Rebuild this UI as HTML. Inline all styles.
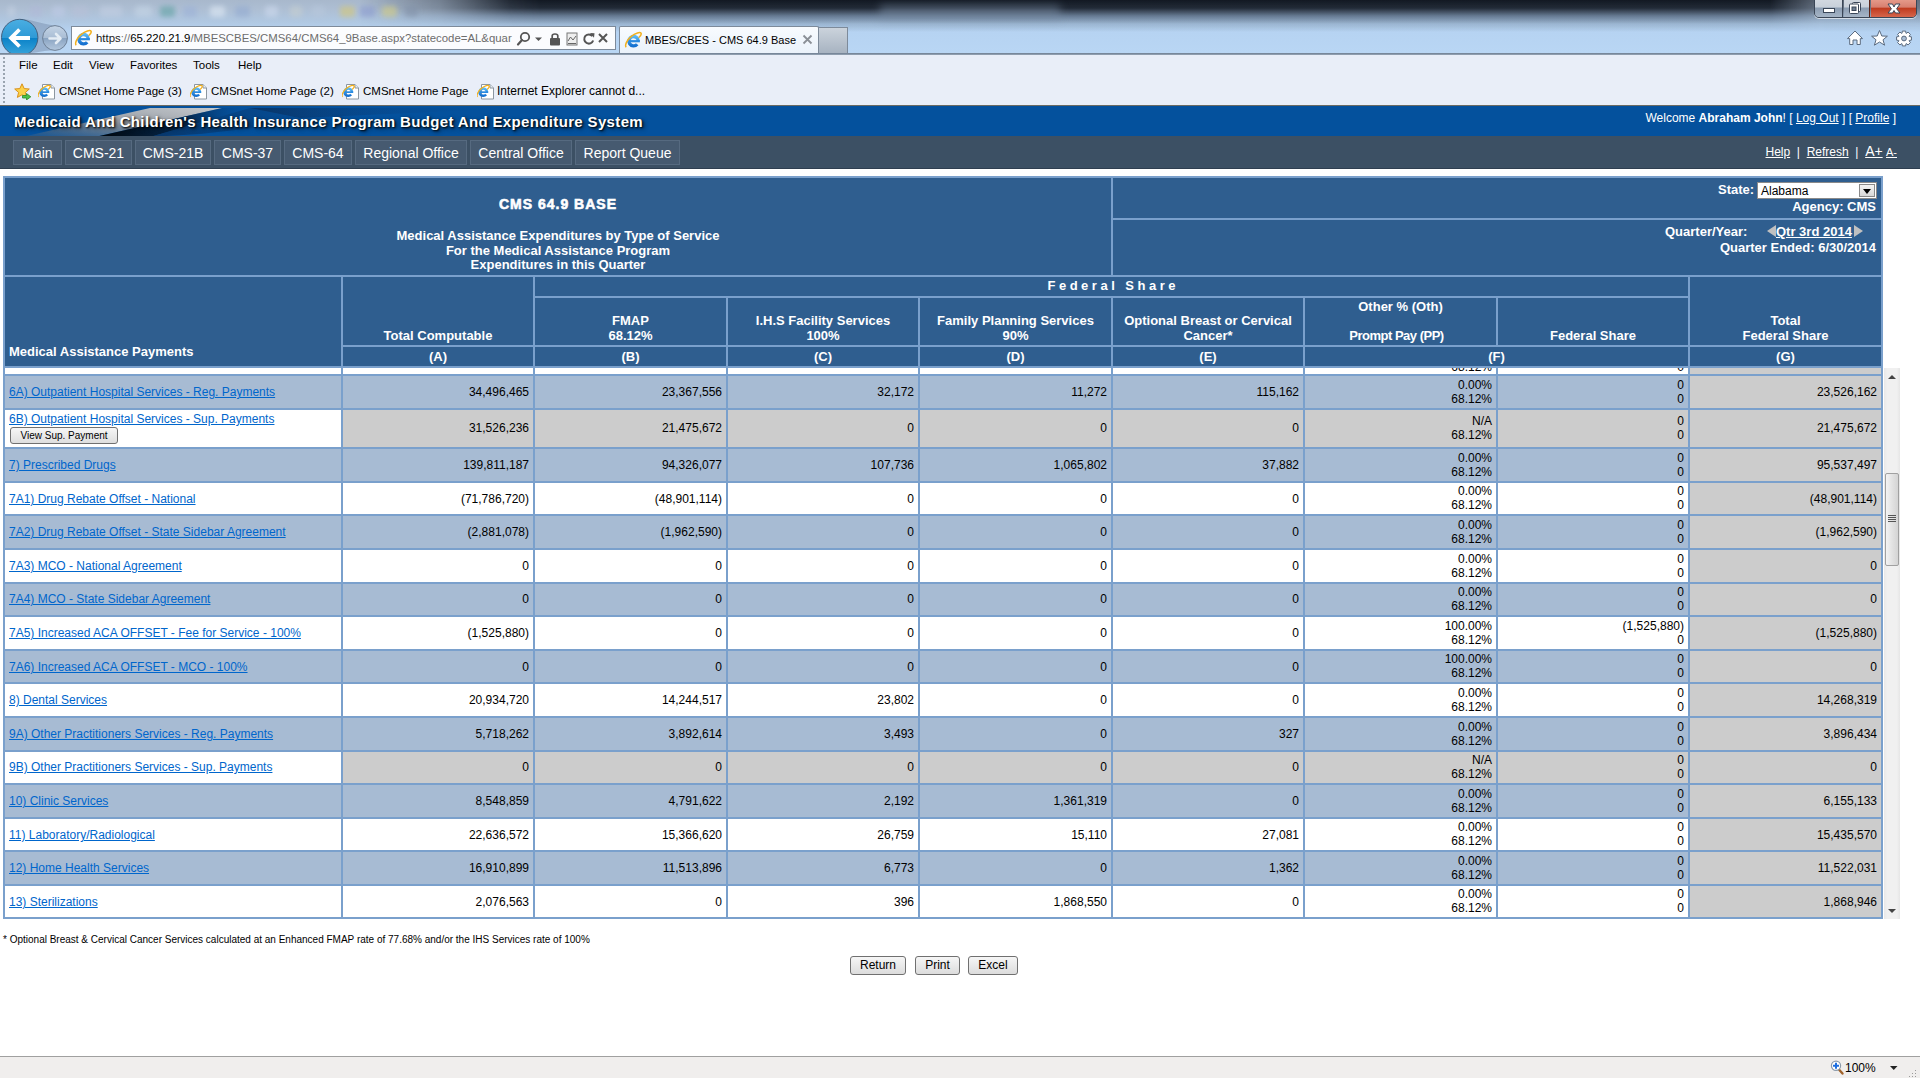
<!DOCTYPE html>
<html><head><meta charset="utf-8"><title>MBES/CBES - CMS 64.9 Base</title>
<style>
*{margin:0;padding:0;box-sizing:border-box}
html,body{width:1920px;height:1080px;overflow:hidden;background:#fff;font-family:"Liberation Sans",sans-serif}
.b{position:absolute}
.hd{color:#fff;font-weight:bold;font-size:13px}
.hd div{position:absolute}
.t1{left:0;width:100%;top:17px;text-align:center;font-size:14px;letter-spacing:1px;line-height:18px;-webkit-text-stroke:.6px #fff}
.t2{left:0;width:100%;top:51px;text-align:center;line-height:14.5px}
.st{left:605px;top:4px;line-height:15px}
.sel{left:644px;top:4px;width:120px;height:17px;background:#fff;border:1px solid #8a8a8a;font-weight:normal;color:#000;font-size:12px}
.sel span{position:absolute;left:3px;top:1px;line-height:14px}
.sel i{position:absolute;right:1px;top:1px;width:16px;height:13px;background:linear-gradient(#f4f4f4,#d8d8d8);border:1px solid #8a8a8a}
.sel i:after{content:"";position:absolute;left:3px;top:4px;border-left:4px solid transparent;border-right:4px solid transparent;border-top:5px solid #000}
.ag{right:5px;top:21px;line-height:15px}
.qy{left:552px;top:4px;line-height:15px}
.qn{left:654px;top:4px;line-height:15px;white-space:nowrap}
.qn u{text-decoration:underline;margin-right:2px;text-underline-offset:1px}
.qn b{display:inline-block;width:0;height:0;border-top:6px solid transparent;border-bottom:6px solid transparent;vertical-align:-1px}
.qn .tl{border-right:9px solid #c0c0c0}
.qn .tr{border-left:9px solid #c0c0c0}
.qe{right:5px;top:20px;line-height:15px}
.mp{left:4px;top:67px;line-height:16px}
.ch{left:0;width:100%;text-align:center;line-height:15px}
.fs{left:0;width:100%;top:1px;text-align:center;letter-spacing:3.5px;text-indent:3.5px;line-height:16px}
.lt{left:0;width:100%;top:2px;text-align:center;line-height:15px}
.dc{font-size:12px;color:#000}
.dc div{position:absolute;white-space:nowrap;line-height:15px}
.lk{left:4px;color:#0066cc;text-decoration:underline}
.num{right:4px;text-align:right}
.two{right:4px;text-align:right;line-height:14px!important}
.vbtn{left:5px;top:17px;width:108px;height:17px;border:1px solid #707070;border-radius:3px;background:linear-gradient(#f6f6f6,#dedede);font-size:10px;text-align:center;line-height:16px!important}
.grip{width:8px;height:7px;background:repeating-linear-gradient(180deg,#555 0,#555 1px,transparent 1px,transparent 2px)}
.foot{left:3px;top:933px;font-size:10px;color:#000;white-space:nowrap;line-height:13px}
.btn{height:19px;border:1px solid #707070;border-radius:3px;background:linear-gradient(#f6f6f6,#dcdcdc);font-size:12px;text-align:center;line-height:17px;color:#000}
.zoomtxt{left:1845px;top:1061px;font-size:12px;color:#000}
/* chrome */
#chrome{position:absolute;left:0;top:0;width:1920px;height:54px;overflow:hidden;background:linear-gradient(180deg,#a8b8cc 0px,#aebfd4 10px,#b0c8e2 22px,#b6d3f2 32px,#b9d6f4 54px)}
#dark{position:absolute;left:360px;top:0;width:1560px;height:36px;background:linear-gradient(180deg,rgba(18,24,34,1) 0,rgba(22,30,42,.92) 8px,rgba(50,70,95,.58) 16px,rgba(90,120,150,.25) 24px,rgba(0,0,0,0) 32px);-webkit-mask-image:linear-gradient(90deg,transparent 0,rgba(0,0,0,.35) 80px,rgba(0,0,0,.9) 150px,#000 180px,#000 1410px,rgba(0,0,0,.5) 1460px,rgba(0,0,0,.45) 1560px)}
#chromeline{position:absolute;left:0;top:53px;width:1920px;height:2px;background:linear-gradient(180deg,#6c7c90,#9aa8b8)}
#menubar{position:absolute;left:0;top:55px;width:1920px;height:50px;background:#e9eef8}
.mi{position:absolute;top:58px;font-size:11.5px;color:#000;line-height:15px}
.fav{position:absolute;top:83px;font-size:12.5px;color:#000;line-height:15px}
#header{position:absolute;left:0;top:105px;width:1920px;height:31px;background:#04519d;overflow:hidden;border-top:1px solid #6b6a62}
#nav{position:absolute;left:0;top:136px;width:1920px;height:33px;background:#3c5064;border-bottom:1px solid #2e3e50}
.tab{position:absolute;top:4px;height:25px;background:#465a70;border:1px solid #566a80;color:#fff;font-size:14px;text-align:center;line-height:25px}
.url{font-size:11.4px;white-space:nowrap;line-height:14px}
.tabt{font-size:11px;white-space:nowrap;line-height:14px;color:#000}
#dark2{display:none}
#blurL{display:none}
.fv{position:absolute;top:84px;font-size:11.5px;color:#000;line-height:14px;white-space:nowrap}
.ttl{position:absolute;left:14px;top:7px;font-size:15px;font-weight:bold;color:#fff;white-space:nowrap;letter-spacing:.35px;text-shadow:1px 1px 2px #000,2px 2px 4px rgba(0,0,0,.6);line-height:18px}
.welcome{position:absolute;right:24px;top:5px;font-size:12px;color:#fff;white-space:nowrap;line-height:15px}
#swoosh{position:absolute;left:40px;top:-30px;width:300px;height:60px;background:linear-gradient(170deg,transparent 40%,rgba(200,200,200,.7) 48%,rgba(40,40,40,.9) 60%,transparent 70%);transform:skewX(-60deg)}
#swoosh2{position:absolute;left:300px;top:-25px;width:400px;height:55px;background:linear-gradient(175deg,transparent 50%,rgba(10,20,40,.6) 62%,transparent 75%)}
.navr{position:absolute;right:23px;top:8px;font-size:12px;color:#fff;white-space:nowrap;line-height:15px}

</style></head><body>
<svg width="0" height="0" style="position:absolute"><defs>
<linearGradient id="ieg" x1="0" y1="0" x2="0" y2="1"><stop offset="0" stop-color="#5ab8f4"/><stop offset="1" stop-color="#1470d0"/></linearGradient>
<symbol id="ie" viewBox="0 0 18 18">
 <path d="M14.30 10.20 A4.7 4.7 0 1 0 13.20 13.22" fill="none" stroke="url(#ieg)" stroke-width="3.3"/>
 <path d="M5.2 10.20 H15.90" stroke="#2a8ae0" stroke-width="2.2"/>
 <path d="M2.2 16.2 C0.6 14.6 2.6 9.2 7 5.6 C11.6 1.8 16.2 0.8 17 2.2 C17.6 3.2 16.4 5.2 14.6 6.8" fill="none" stroke="#f2b01e" stroke-width="1.5"/>
</symbol>
<symbol id="iep" viewBox="0 0 18 17">
 <path d="M4.5 1.5 H13 L16.5 5 V16 H4.5 Z" fill="#fff" stroke="#8c96a0" stroke-width="1"/>
 <path d="M13 1.5 V5 H16.5" fill="#e8eef4" stroke="#8c96a0" stroke-width="1"/>
 <g transform="translate(-1.2,1.2) scale(.78)">
 <path d="M14.30 10.20 A4.7 4.7 0 1 0 13.20 13.22" fill="none" stroke="url(#ieg)" stroke-width="3.3"/>
 <path d="M5.2 10.20 H15.90" stroke="#2a8ae0" stroke-width="2.2"/>
 <path d="M2.2 16.2 C0.6 14.6 2.6 9.2 7 5.6 C11.6 1.8 16.2 0.8 17 2.2 C17.6 3.2 16.4 5.2 14.6 6.8" fill="none" stroke="#f2b01e" stroke-width="1.6"/>
 </g>
</symbol>
</defs></svg>
<div id="chrome"><div id="dark"></div><div class="b" style="left:880px;top:5px;width:180px;height:14px;background:rgba(120,140,165,.45);filter:blur(4px)"></div><div id="dark2"></div><div id="blurL"></div><div class="b" style="left:8px;top:6px;width:7px;height:11px;background:#c8d4e4;border-radius:3px;opacity:.55;filter:blur(2.5px)"></div><div class="b" style="left:30px;top:6px;width:12px;height:11px;background:#b0b8d8;border-radius:3px;opacity:.55;filter:blur(2.5px)"></div><div class="b" style="left:52px;top:6px;width:13px;height:11px;background:#c0cce8;border-radius:3px;opacity:.55;filter:blur(2.5px)"></div><div class="b" style="left:72px;top:6px;width:16px;height:11px;background:#b8c0d8;border-radius:3px;opacity:.55;filter:blur(2.5px)"></div><div class="b" style="left:100px;top:6px;width:22px;height:11px;background:#c4d0e4;border-radius:3px;opacity:.55;filter:blur(2.5px)"></div><div class="b" style="left:135px;top:6px;width:17px;height:11px;background:#c8d8e8;border-radius:3px;opacity:.55;filter:blur(2.5px)"></div><div class="b" style="left:160px;top:6px;width:15px;height:11px;background:#5aa0a0;border-radius:3px;opacity:.55;filter:blur(2.5px)"></div><div class="b" style="left:183px;top:6px;width:14px;height:11px;background:#9ab0d8;border-radius:3px;opacity:.55;filter:blur(2.5px)"></div><div class="b" style="left:210px;top:6px;width:15px;height:11px;background:#e4eef8;border-radius:3px;opacity:.55;filter:blur(2.5px)"></div><div class="b" style="left:235px;top:6px;width:15px;height:11px;background:#90a8d0;border-radius:3px;opacity:.55;filter:blur(2.5px)"></div><div class="b" style="left:265px;top:6px;width:13px;height:11px;background:#d0dcf0;border-radius:3px;opacity:.55;filter:blur(2.5px)"></div><div class="b" style="left:290px;top:6px;width:12px;height:11px;background:#c8d0d0;border-radius:3px;opacity:.55;filter:blur(2.5px)"></div><div class="b" style="left:312px;top:6px;width:13px;height:11px;background:#b8c8dc;border-radius:3px;opacity:.55;filter:blur(2.5px)"></div><div class="b" style="left:340px;top:6px;width:15px;height:11px;background:#d8c870;border-radius:3px;opacity:.55;filter:blur(2.5px)"></div><div class="b" style="left:360px;top:6px;width:15px;height:11px;background:#8898d0;border-radius:3px;opacity:.55;filter:blur(2.5px)"></div><div class="b" style="left:382px;top:6px;width:15px;height:11px;background:#d8d080;border-radius:3px;opacity:.55;filter:blur(2.5px)"></div><div class="b" style="left:405px;top:6px;width:13px;height:11px;background:#8090a8;border-radius:3px;opacity:.55;filter:blur(2.5px)"></div></div>
<!-- window buttons -->
<div class="b" style="left:1814px;top:-3px;width:103px;height:21px;border:1px solid #3b4656;border-radius:0 0 5px 5px;overflow:hidden;box-shadow:0 1px 0 rgba(255,255,255,.6)">
 <div class="b" style="left:0;top:0;width:28px;height:20px;background:linear-gradient(#d4dae2 0,#c8d0da 45%,#8c9db2 50%,#a9b8c9 100%);border-right:1px solid #3b4656"></div>
 <div class="b" style="left:29px;top:0;width:26px;height:20px;background:linear-gradient(#d4dae2 0,#c8d0da 45%,#8c9db2 50%,#a9b8c9 100%);border-right:1px solid #5a2418"></div>
 <div class="b" style="left:56px;top:0;width:47px;height:20px;background:linear-gradient(#e8a090 0,#d88070 45%,#c03c20 52%,#d86a50 100%)"></div>
</div>
<svg class="b" style="left:1814px;top:0" width="106" height="20" viewBox="0 0 106 20">
 <rect x="9.5" y="8.5" width="11" height="4" fill="#fff" stroke="#3a4658" stroke-width="1"/>
 <rect x="38.5" y="2.5" width="8" height="9" rx="1" fill="#fff" stroke="#3a4658" stroke-width="1"/>
 <rect x="35.5" y="4" width="9" height="9.5" rx="1" fill="#fff" stroke="#3a4658" stroke-width="1"/>
 <rect x="38" y="7" width="4" height="3.5" fill="#6c7c90" stroke="#3a4658" stroke-width="1"/>
 <path d="M74 4 L78.5 4 L80 7 L81.5 4 L86 4 L82.6 8.8 L86 13 L81.5 13 L80 10.5 L78.5 13 L74 13 L77.4 8.8 Z" fill="#fff" stroke="#3a4658" stroke-width="1"/>
</svg>
<!-- back / forward -->
<svg class="b" style="left:0;top:18px" width="72" height="37" viewBox="0 0 72 37">
 <defs>
  <linearGradient id="bk" x1="0" y1="0" x2="0" y2="1"><stop offset="0" stop-color="#4aaee2"/><stop offset=".5" stop-color="#2f9ad6"/><stop offset=".52" stop-color="#0a82c8"/><stop offset="1" stop-color="#3aa6dc"/></linearGradient>
  <linearGradient id="fw" x1="0" y1="0" x2="0" y2="1"><stop offset="0" stop-color="#c4d4e6"/><stop offset=".5" stop-color="#a9bdd4"/><stop offset=".52" stop-color="#8aa4c2"/><stop offset="1" stop-color="#b4c8de"/></linearGradient>
 </defs>
 <path d="M20 1 C32 1 40 6 55 7.5 L55 32 C40 33 30 36 20 36 Z" fill="#7d94b0" opacity=".55"/>
 <circle cx="55" cy="20" r="12.4" fill="url(#fw)" stroke="#6e8096" stroke-width="1"/>
 <path d="M49.5 20.5 H60 M56 16 L60.5 20.5 L56 25" fill="none" stroke="#e4ecf4" stroke-width="2.6" stroke-linecap="round" stroke-linejoin="round"/>
 <circle cx="19.7" cy="19.5" r="18.2" fill="url(#bk)" stroke="#44607e" stroke-width="1"/>
 <path d="M12 20 H30 M19.5 11.5 L11 20 L19.5 28.5" fill="none" stroke="#fff" stroke-width="3.8" stroke-linecap="butt" stroke-linejoin="miter"/>
</svg>
<!-- address bar -->
<div class="b" style="left:71px;top:26px;width:545px;height:24px;background:#fbfcfe;border:1px solid #7d8a9a;box-shadow:inset 0 1px 0 #fff"></div>
<svg class="b" style="left:74px;top:29px" width="18" height="18"><use href="#ie"/></svg>
<div class="b url" style="left:96px;top:31px"><span style="color:#1a1a1a">https</span><span style="color:#777">://</span><span style="color:#000">65.220.21.9</span><span style="color:#6d6d6d">/MBESCBES/CMS64/CMS64_9Base.aspx?statecode=AL&amp;quar</span></div>
<svg class="b" style="left:514px;top:30px" width="100" height="18" viewBox="0 0 100 18">
 <circle cx="11" cy="7" r="4.2" fill="none" stroke="#555" stroke-width="1.8"/>
 <path d="M8 10 L4 14.5" stroke="#555" stroke-width="2.2" stroke-linecap="round"/>
 <path d="M21 7.5 H28 L24.5 11 Z" fill="#555"/>
 <rect x="36" y="8" width="10" height="7.5" rx="1" fill="#555"/>
 <path d="M38.2 8.5 V5.8 C38.2 3.4 43.8 3.4 43.8 5.8 V8.5" fill="none" stroke="#555" stroke-width="1.7"/>
 <rect x="53" y="3" width="10" height="12" fill="#eee" stroke="#777" stroke-width="1"/>
 <path d="M54 11 L56.5 7 L59 10 L62 6 M54 13.5 H62" stroke="#666" stroke-width="1" fill="none"/>
 <path d="M78.5 6.2 A4.6 4.6 0 1 0 79.2 10.5" fill="none" stroke="#555" stroke-width="2"/>
 <path d="M76 3 L80.5 3.2 L80 7.8 Z" fill="#555"/>
 <path d="M85 4 L93 12 M93 4 L85 12" stroke="#555" stroke-width="2"/>
</svg>
<!-- tab -->
<div class="b" style="left:619px;top:26px;width:200px;height:29px;background:linear-gradient(#f8fbfe,#e9f1fa);border:1px solid #7d8a9a;border-bottom:none;border-radius:2px 2px 0 0"></div>
<svg class="b" style="left:624px;top:31px" width="18" height="18"><use href="#ie"/></svg>
<div class="b tabt" style="left:645px;top:33px">MBES/CBES - CMS 64.9 Base</div>
<svg class="b" style="left:802px;top:34px" width="11" height="11" viewBox="0 0 11 11"><path d="M1.5 1.5 L9.5 9.5 M9.5 1.5 L1.5 9.5" stroke="#8a8f96" stroke-width="1.8"/></svg>
<div class="b" style="left:818px;top:27px;width:30px;height:27px;background:linear-gradient(#cbd3dc,#a6b2c0);border:1px solid #7d8a9a;border-bottom:none"></div>
<!-- right icons -->
<svg class="b" style="left:1845px;top:29px" width="72" height="18" viewBox="0 0 72 18">
 <path d="M10 2 L17.5 9.6 L15.3 9.6 L15.3 15.5 L12 15.5 L12 11 L8 11 L8 15.5 L4.7 15.5 L4.7 9.6 L2.5 9.6 Z" fill="#fff" stroke="#5a6a7e" stroke-width="1" stroke-linejoin="round"/>
 <path d="M34.5 1.5 L36.8 7 L42.4 7.2 L38 10.8 L39.6 16.2 L34.5 13 L29.4 16.2 L31 10.8 L26.6 7.2 L32.2 7 Z" fill="#fff" stroke="#5a6a7e" stroke-width="1" stroke-linejoin="round"/>
 <g transform="translate(59,9.5)">
  <path d="M-1.97 -5.24 L-1.66 -7.42 L1.66 -7.42 L1.97 -5.24 L2.31 -5.10 L4.07 -6.42 L6.42 -4.07 L5.10 -2.31 L5.24 -1.97 L7.42 -1.66 L7.42 1.66 L5.24 1.97 L5.10 2.31 L6.42 4.07 L4.07 6.42 L2.31 5.10 L1.97 5.24 L1.66 7.42 L-1.66 7.42 L-1.97 5.24 L-2.31 5.10 L-4.07 6.42 L-6.42 4.07 L-5.10 2.31 L-5.24 1.97 L-7.42 1.66 L-7.42 -1.66 L-5.24 -1.97 L-5.10 -2.31 L-6.42 -4.07 L-4.07 -6.42 L-2.31 -5.10 Z" fill="#fff" stroke="#5a6a7e" stroke-width="1" stroke-linejoin="round"/>
  <circle r="2.4" fill="#a9bdd4" stroke="#5a6a7e" stroke-width="1"/>
 </g>
</svg>
<div id="chromeline"></div>
<div id="menubar"></div>
<div class="b" style="left:3px;top:57px;width:2px;height:46px;background:repeating-linear-gradient(180deg,#9aa4b0 0,#9aa4b0 2px,transparent 2px,transparent 4px)"></div>
<div class="mi" style="left:19px">File</div>
<div class="mi" style="left:53px">Edit</div>
<div class="mi" style="left:89px">View</div>
<div class="mi" style="left:130px">Favorites</div>
<div class="mi" style="left:193px">Tools</div>
<div class="mi" style="left:238px">Help</div>
<!-- favorites bar -->
<svg class="b" style="left:14px;top:83px" width="18" height="17" viewBox="0 0 18 17">
 <path d="M8 0.8 L10.2 5.6 L15.3 6 L11.4 9.4 L12.6 14.4 L8 11.8 L3.4 14.4 L4.6 9.4 L0.7 6 L5.8 5.6 Z" fill="#fcd24a" stroke="#d9901a" stroke-width="1"/>
 <path d="M8.5 12.5 H12.5 V10.5 L16.8 13.8 L12.5 17 V15 H8.5 Z" fill="#4cc24a" stroke="#2a8a2a" stroke-width=".8"/>
</svg>
<svg class="b" style="left:38px;top:83px" width="18" height="17"><use href="#iep"/></svg><div class="fv" style="left:59px">CMSnet Home Page (3)</div><svg class="b" style="left:190px;top:83px" width="18" height="17"><use href="#iep"/></svg><div class="fv" style="left:211px">CMSnet Home Page (2)</div><svg class="b" style="left:342px;top:83px" width="18" height="17"><use href="#iep"/></svg><div class="fv" style="left:363px">CMSnet Home Page</div><svg class="b" style="left:477px;top:83px" width="18" height="17"><use href="#iep"/></svg><div class="fv" style="left:497px;font-size:12px">Internet Explorer cannot d...</div>
<div id="header"><svg class="b" style="left:0;top:0" width="700" height="31" viewBox="0 0 700 31">
 <defs>
  <linearGradient id="sg1" x1="0" y1="1" x2="1" y2="0"><stop offset="0" stop-color="#5a6470" stop-opacity=".2"/><stop offset=".5" stop-color="#9aa0a8"/><stop offset="1" stop-color="#c4c8cc"/></linearGradient>
  <linearGradient id="sg2" x1="0" y1="0" x2="1" y2="0"><stop offset="0" stop-color="#000" stop-opacity=".95"/><stop offset=".6" stop-color="#06182e" stop-opacity=".7"/><stop offset="1" stop-color="#0a53a3" stop-opacity="0"/></linearGradient>
  <linearGradient id="sg3" x1="0" y1="0" x2="1" y2="0"><stop offset="0" stop-color="#0a2040" stop-opacity=".8"/><stop offset="1" stop-color="#0a53a3" stop-opacity="0"/></linearGradient>
 </defs>
 <polygon points="22,31 150,2 222,2 95,31" fill="url(#sg1)"/>
 <polygon points="95,31 222,2 250,2 150,31" fill="url(#sg2)"/>
 <polygon points="150,31 250,2 420,3 200,28" fill="url(#sg3)" opacity=".7"/>
 <polygon points="250,2 520,2 300,12" fill="url(#sg3)" opacity=".6"/>
</svg><div class="ttl">Medicaid And Children's Health Insurance Program Budget And Expenditure System</div>
<div class="welcome">Welcome <b>Abraham John</b>! [ <u>Log Out</u> ] [ <u>Profile</u> ]</div></div>
<div id="nav">
 <div class="tab" style="left:13px;width:49px">Main</div>
 <div class="tab" style="left:65px;width:67px">CMS-21</div>
 <div class="tab" style="left:135px;width:76px">CMS-21B</div>
 <div class="tab" style="left:214px;width:67px">CMS-37</div>
 <div class="tab" style="left:284px;width:68px">CMS-64</div>
 <div class="tab" style="left:355px;width:112px">Regional Office</div>
 <div class="tab" style="left:470px;width:102px">Central Office</div>
 <div class="tab" style="left:575px;width:105px">Report Queue</div>
 <div class="navr"><u>Help</u> &nbsp;|&nbsp; <u>Refresh</u> &nbsp;|&nbsp; <u style="font-size:14px">A+</u> <u style="font-size:11px">A-</u></div>
</div>

<div class="b " style="left:3px;top:176px;width:1880px;height:192px;background:#7aa0cc"></div><div class="b hd" style="left:5px;top:178px;width:1106px;height:97px;background:#2f5e8f"><div class="t1">CMS 64.9 BASE</div><div class="t2">Medical Assistance Expenditures by Type of Service<br>For the Medical Assistance Program<br>Expenditures in this Quarter</div></div><div class="b hd" style="left:1113px;top:178px;width:768px;height:40px;background:#2f5e8f"><div class="st">State:</div><div class="sel"><span>Alabama</span><i></i></div><div class="ag">Agency: CMS</div></div><div class="b hd" style="left:1113px;top:220px;width:768px;height:55px;background:#2f5e8f"><div class="qy">Quarter/Year:</div><div class="qn"><b class="tl"></b><u>Qtr 3rd 2014</u><b class="tr"></b></div><div class="qe">Quarter Ended: 6/30/2014</div></div><div class="b hd" style="left:5px;top:277px;width:336px;height:89px;background:#2f5e8f"><div class="mp">Medical Assistance Payments</div></div><div class="b hd" style="left:343px;top:277px;width:190px;height:68px;background:#2f5e8f"><div class="ch" style="top:51px">Total Computable</div></div><div class="b hd" style="left:535px;top:277px;width:1153px;height:19px;background:#2f5e8f"><div class="fs">Federal Share</div></div><div class="b hd" style="left:535px;top:298px;width:191px;height:47px;background:#2f5e8f"><div class="ch" style="top:15px">FMAP<br>68.12%</div></div><div class="b hd" style="left:728px;top:298px;width:190px;height:47px;background:#2f5e8f"><div class="ch" style="top:15px">I.H.S Facility Services<br>100%</div></div><div class="b hd" style="left:920px;top:298px;width:191px;height:47px;background:#2f5e8f"><div class="ch" style="top:15px">Family Planning Services<br>90%</div></div><div class="b hd" style="left:1113px;top:298px;width:190px;height:47px;background:#2f5e8f"><div class="ch" style="top:15px">Optional Breast or Cervical<br>Cancer*</div></div><div class="b hd" style="left:1305px;top:298px;width:191px;height:47px;background:#2f5e8f"><div class="ch" style="top:1px">Other % (Oth)</div><div class="ch" style="top:30px;letter-spacing:-.5px;text-indent:-8px">Prompt Pay (PP)</div></div><div class="b hd" style="left:1498px;top:298px;width:190px;height:47px;background:#2f5e8f"><div class="ch" style="top:30px">Federal Share</div></div><div class="b hd" style="left:1690px;top:277px;width:191px;height:68px;background:#2f5e8f"><div class="ch" style="top:36px">Total<br>Federal Share</div></div><div class="b hd" style="left:343px;top:347px;width:190px;height:19px;background:#2f5e8f"><div class="lt">(A)</div></div><div class="b hd" style="left:535px;top:347px;width:191px;height:19px;background:#2f5e8f"><div class="lt">(B)</div></div><div class="b hd" style="left:728px;top:347px;width:190px;height:19px;background:#2f5e8f"><div class="lt">(C)</div></div><div class="b hd" style="left:920px;top:347px;width:191px;height:19px;background:#2f5e8f"><div class="lt">(D)</div></div><div class="b hd" style="left:1113px;top:347px;width:190px;height:19px;background:#2f5e8f"><div class="lt">(E)</div></div><div class="b hd" style="left:1305px;top:347px;width:383px;height:19px;background:#2f5e8f"><div class="lt">(F)</div></div><div class="b hd" style="left:1690px;top:347px;width:191px;height:19px;background:#2f5e8f"><div class="lt">(G)</div></div><div class="b" style="left:3px;top:368px;width:1880px;height:551px;background:#7aa0cc;overflow:hidden"><div class="b dc" style="left:2px;top:0px;width:336px;height:6px;background:#ffffff"></div><div class="b dc" style="left:340px;top:0px;width:190px;height:6px;background:#ffffff"></div><div class="b dc" style="left:532px;top:0px;width:191px;height:6px;background:#ffffff"></div><div class="b dc" style="left:725px;top:0px;width:190px;height:6px;background:#ffffff"></div><div class="b dc" style="left:917px;top:0px;width:191px;height:6px;background:#ffffff"></div><div class="b dc" style="left:1110px;top:0px;width:190px;height:6px;background:#ffffff"></div><div class="b dc" style="left:1302px;top:0px;width:191px;height:6px;background:#ffffff"><div class="two" style="top:-22px">0.00%<br>68.12%</div></div><div class="b dc" style="left:1495px;top:0px;width:190px;height:6px;background:#ffffff"><div class="two" style="top:-22px">0<br>0</div></div><div class="b dc" style="left:1687px;top:0px;width:191px;height:6px;background:#cccccc"></div><div class="b dc" style="left:2px;top:8px;width:336px;height:32px;background:#a7bbd3"><div class="lk" style="top:9px">6A) Outpatient Hospital Services - Reg. Payments</div></div><div class="b dc" style="left:340px;top:8px;width:190px;height:32px;background:#a7bbd3"><div class="num" style="top:9px">34,496,465</div></div><div class="b dc" style="left:532px;top:8px;width:191px;height:32px;background:#a7bbd3"><div class="num" style="top:9px">23,367,556</div></div><div class="b dc" style="left:725px;top:8px;width:190px;height:32px;background:#a7bbd3"><div class="num" style="top:9px">32,172</div></div><div class="b dc" style="left:917px;top:8px;width:191px;height:32px;background:#a7bbd3"><div class="num" style="top:9px">11,272</div></div><div class="b dc" style="left:1110px;top:8px;width:190px;height:32px;background:#a7bbd3"><div class="num" style="top:9px">115,162</div></div><div class="b dc" style="left:1302px;top:8px;width:191px;height:32px;background:#a7bbd3"><div class="two" style="top:2px">0.00%<br>68.12%</div></div><div class="b dc" style="left:1495px;top:8px;width:190px;height:32px;background:#a7bbd3"><div class="two" style="top:2px">0<br>0</div></div><div class="b dc" style="left:1687px;top:8px;width:191px;height:32px;background:#cccccc"><div class="num" style="top:9px">23,526,162</div></div><div class="b dc" style="left:2px;top:42px;width:336px;height:37px;background:#ffffff"><div class="lk" style="top:2px">6B) Outpatient Hospital Services - Sup. Payments</div><div class="vbtn">View Sup. Payment</div></div><div class="b dc" style="left:340px;top:42px;width:190px;height:37px;background:#cccccc"><div class="num" style="top:11px">31,526,236</div></div><div class="b dc" style="left:532px;top:42px;width:191px;height:37px;background:#cccccc"><div class="num" style="top:11px">21,475,672</div></div><div class="b dc" style="left:725px;top:42px;width:190px;height:37px;background:#cccccc"><div class="num" style="top:11px">0</div></div><div class="b dc" style="left:917px;top:42px;width:191px;height:37px;background:#cccccc"><div class="num" style="top:11px">0</div></div><div class="b dc" style="left:1110px;top:42px;width:190px;height:37px;background:#cccccc"><div class="num" style="top:11px">0</div></div><div class="b dc" style="left:1302px;top:42px;width:191px;height:37px;background:#cccccc"><div class="two" style="top:4px">N/A<br>68.12%</div></div><div class="b dc" style="left:1495px;top:42px;width:190px;height:37px;background:#cccccc"><div class="two" style="top:4px">0<br>0</div></div><div class="b dc" style="left:1687px;top:42px;width:191px;height:37px;background:#cccccc"><div class="num" style="top:11px">21,475,672</div></div><div class="b dc" style="left:2px;top:81px;width:336px;height:32px;background:#a7bbd3"><div class="lk" style="top:9px">7) Prescribed Drugs</div></div><div class="b dc" style="left:340px;top:81px;width:190px;height:32px;background:#a7bbd3"><div class="num" style="top:9px">139,811,187</div></div><div class="b dc" style="left:532px;top:81px;width:191px;height:32px;background:#a7bbd3"><div class="num" style="top:9px">94,326,077</div></div><div class="b dc" style="left:725px;top:81px;width:190px;height:32px;background:#a7bbd3"><div class="num" style="top:9px">107,736</div></div><div class="b dc" style="left:917px;top:81px;width:191px;height:32px;background:#a7bbd3"><div class="num" style="top:9px">1,065,802</div></div><div class="b dc" style="left:1110px;top:81px;width:190px;height:32px;background:#a7bbd3"><div class="num" style="top:9px">37,882</div></div><div class="b dc" style="left:1302px;top:81px;width:191px;height:32px;background:#a7bbd3"><div class="two" style="top:2px">0.00%<br>68.12%</div></div><div class="b dc" style="left:1495px;top:81px;width:190px;height:32px;background:#a7bbd3"><div class="two" style="top:2px">0<br>0</div></div><div class="b dc" style="left:1687px;top:81px;width:191px;height:32px;background:#cccccc"><div class="num" style="top:9px">95,537,497</div></div><div class="b dc" style="left:2px;top:115px;width:336px;height:31px;background:#ffffff"><div class="lk" style="top:9px">7A1) Drug Rebate Offset - National</div></div><div class="b dc" style="left:340px;top:115px;width:190px;height:31px;background:#ffffff"><div class="num" style="top:9px">(71,786,720)</div></div><div class="b dc" style="left:532px;top:115px;width:191px;height:31px;background:#ffffff"><div class="num" style="top:9px">(48,901,114)</div></div><div class="b dc" style="left:725px;top:115px;width:190px;height:31px;background:#ffffff"><div class="num" style="top:9px">0</div></div><div class="b dc" style="left:917px;top:115px;width:191px;height:31px;background:#ffffff"><div class="num" style="top:9px">0</div></div><div class="b dc" style="left:1110px;top:115px;width:190px;height:31px;background:#ffffff"><div class="num" style="top:9px">0</div></div><div class="b dc" style="left:1302px;top:115px;width:191px;height:31px;background:#ffffff"><div class="two" style="top:1px">0.00%<br>68.12%</div></div><div class="b dc" style="left:1495px;top:115px;width:190px;height:31px;background:#ffffff"><div class="two" style="top:1px">0<br>0</div></div><div class="b dc" style="left:1687px;top:115px;width:191px;height:31px;background:#cccccc"><div class="num" style="top:9px">(48,901,114)</div></div><div class="b dc" style="left:2px;top:148px;width:336px;height:32px;background:#a7bbd3"><div class="lk" style="top:9px">7A2) Drug Rebate Offset - State Sidebar Agreement</div></div><div class="b dc" style="left:340px;top:148px;width:190px;height:32px;background:#a7bbd3"><div class="num" style="top:9px">(2,881,078)</div></div><div class="b dc" style="left:532px;top:148px;width:191px;height:32px;background:#a7bbd3"><div class="num" style="top:9px">(1,962,590)</div></div><div class="b dc" style="left:725px;top:148px;width:190px;height:32px;background:#a7bbd3"><div class="num" style="top:9px">0</div></div><div class="b dc" style="left:917px;top:148px;width:191px;height:32px;background:#a7bbd3"><div class="num" style="top:9px">0</div></div><div class="b dc" style="left:1110px;top:148px;width:190px;height:32px;background:#a7bbd3"><div class="num" style="top:9px">0</div></div><div class="b dc" style="left:1302px;top:148px;width:191px;height:32px;background:#a7bbd3"><div class="two" style="top:2px">0.00%<br>68.12%</div></div><div class="b dc" style="left:1495px;top:148px;width:190px;height:32px;background:#a7bbd3"><div class="two" style="top:2px">0<br>0</div></div><div class="b dc" style="left:1687px;top:148px;width:191px;height:32px;background:#cccccc"><div class="num" style="top:9px">(1,962,590)</div></div><div class="b dc" style="left:2px;top:182px;width:336px;height:32px;background:#ffffff"><div class="lk" style="top:9px">7A3) MCO - National Agreement</div></div><div class="b dc" style="left:340px;top:182px;width:190px;height:32px;background:#ffffff"><div class="num" style="top:9px">0</div></div><div class="b dc" style="left:532px;top:182px;width:191px;height:32px;background:#ffffff"><div class="num" style="top:9px">0</div></div><div class="b dc" style="left:725px;top:182px;width:190px;height:32px;background:#ffffff"><div class="num" style="top:9px">0</div></div><div class="b dc" style="left:917px;top:182px;width:191px;height:32px;background:#ffffff"><div class="num" style="top:9px">0</div></div><div class="b dc" style="left:1110px;top:182px;width:190px;height:32px;background:#ffffff"><div class="num" style="top:9px">0</div></div><div class="b dc" style="left:1302px;top:182px;width:191px;height:32px;background:#ffffff"><div class="two" style="top:2px">0.00%<br>68.12%</div></div><div class="b dc" style="left:1495px;top:182px;width:190px;height:32px;background:#ffffff"><div class="two" style="top:2px">0<br>0</div></div><div class="b dc" style="left:1687px;top:182px;width:191px;height:32px;background:#cccccc"><div class="num" style="top:9px">0</div></div><div class="b dc" style="left:2px;top:216px;width:336px;height:31px;background:#a7bbd3"><div class="lk" style="top:8px">7A4) MCO - State Sidebar Agreement</div></div><div class="b dc" style="left:340px;top:216px;width:190px;height:31px;background:#a7bbd3"><div class="num" style="top:8px">0</div></div><div class="b dc" style="left:532px;top:216px;width:191px;height:31px;background:#a7bbd3"><div class="num" style="top:8px">0</div></div><div class="b dc" style="left:725px;top:216px;width:190px;height:31px;background:#a7bbd3"><div class="num" style="top:8px">0</div></div><div class="b dc" style="left:917px;top:216px;width:191px;height:31px;background:#a7bbd3"><div class="num" style="top:8px">0</div></div><div class="b dc" style="left:1110px;top:216px;width:190px;height:31px;background:#a7bbd3"><div class="num" style="top:8px">0</div></div><div class="b dc" style="left:1302px;top:216px;width:191px;height:31px;background:#a7bbd3"><div class="two" style="top:1px">0.00%<br>68.12%</div></div><div class="b dc" style="left:1495px;top:216px;width:190px;height:31px;background:#a7bbd3"><div class="two" style="top:1px">0<br>0</div></div><div class="b dc" style="left:1687px;top:216px;width:191px;height:31px;background:#cccccc"><div class="num" style="top:8px">0</div></div><div class="b dc" style="left:2px;top:249px;width:336px;height:32px;background:#ffffff"><div class="lk" style="top:9px">7A5) Increased ACA OFFSET - Fee for Service - 100%</div></div><div class="b dc" style="left:340px;top:249px;width:190px;height:32px;background:#ffffff"><div class="num" style="top:9px">(1,525,880)</div></div><div class="b dc" style="left:532px;top:249px;width:191px;height:32px;background:#ffffff"><div class="num" style="top:9px">0</div></div><div class="b dc" style="left:725px;top:249px;width:190px;height:32px;background:#ffffff"><div class="num" style="top:9px">0</div></div><div class="b dc" style="left:917px;top:249px;width:191px;height:32px;background:#ffffff"><div class="num" style="top:9px">0</div></div><div class="b dc" style="left:1110px;top:249px;width:190px;height:32px;background:#ffffff"><div class="num" style="top:9px">0</div></div><div class="b dc" style="left:1302px;top:249px;width:191px;height:32px;background:#ffffff"><div class="two" style="top:2px">100.00%<br>68.12%</div></div><div class="b dc" style="left:1495px;top:249px;width:190px;height:32px;background:#ffffff"><div class="two" style="top:2px">(1,525,880)<br>0</div></div><div class="b dc" style="left:1687px;top:249px;width:191px;height:32px;background:#cccccc"><div class="num" style="top:9px">(1,525,880)</div></div><div class="b dc" style="left:2px;top:283px;width:336px;height:31px;background:#a7bbd3"><div class="lk" style="top:9px">7A6) Increased ACA OFFSET - MCO - 100%</div></div><div class="b dc" style="left:340px;top:283px;width:190px;height:31px;background:#a7bbd3"><div class="num" style="top:9px">0</div></div><div class="b dc" style="left:532px;top:283px;width:191px;height:31px;background:#a7bbd3"><div class="num" style="top:9px">0</div></div><div class="b dc" style="left:725px;top:283px;width:190px;height:31px;background:#a7bbd3"><div class="num" style="top:9px">0</div></div><div class="b dc" style="left:917px;top:283px;width:191px;height:31px;background:#a7bbd3"><div class="num" style="top:9px">0</div></div><div class="b dc" style="left:1110px;top:283px;width:190px;height:31px;background:#a7bbd3"><div class="num" style="top:9px">0</div></div><div class="b dc" style="left:1302px;top:283px;width:191px;height:31px;background:#a7bbd3"><div class="two" style="top:1px">100.00%<br>68.12%</div></div><div class="b dc" style="left:1495px;top:283px;width:190px;height:31px;background:#a7bbd3"><div class="two" style="top:1px">0<br>0</div></div><div class="b dc" style="left:1687px;top:283px;width:191px;height:31px;background:#cccccc"><div class="num" style="top:9px">0</div></div><div class="b dc" style="left:2px;top:316px;width:336px;height:32px;background:#ffffff"><div class="lk" style="top:9px">8) Dental Services</div></div><div class="b dc" style="left:340px;top:316px;width:190px;height:32px;background:#ffffff"><div class="num" style="top:9px">20,934,720</div></div><div class="b dc" style="left:532px;top:316px;width:191px;height:32px;background:#ffffff"><div class="num" style="top:9px">14,244,517</div></div><div class="b dc" style="left:725px;top:316px;width:190px;height:32px;background:#ffffff"><div class="num" style="top:9px">23,802</div></div><div class="b dc" style="left:917px;top:316px;width:191px;height:32px;background:#ffffff"><div class="num" style="top:9px">0</div></div><div class="b dc" style="left:1110px;top:316px;width:190px;height:32px;background:#ffffff"><div class="num" style="top:9px">0</div></div><div class="b dc" style="left:1302px;top:316px;width:191px;height:32px;background:#ffffff"><div class="two" style="top:2px">0.00%<br>68.12%</div></div><div class="b dc" style="left:1495px;top:316px;width:190px;height:32px;background:#ffffff"><div class="two" style="top:2px">0<br>0</div></div><div class="b dc" style="left:1687px;top:316px;width:191px;height:32px;background:#cccccc"><div class="num" style="top:9px">14,268,319</div></div><div class="b dc" style="left:2px;top:350px;width:336px;height:32px;background:#a7bbd3"><div class="lk" style="top:9px">9A) Other Practitioners Services - Reg. Payments</div></div><div class="b dc" style="left:340px;top:350px;width:190px;height:32px;background:#a7bbd3"><div class="num" style="top:9px">5,718,262</div></div><div class="b dc" style="left:532px;top:350px;width:191px;height:32px;background:#a7bbd3"><div class="num" style="top:9px">3,892,614</div></div><div class="b dc" style="left:725px;top:350px;width:190px;height:32px;background:#a7bbd3"><div class="num" style="top:9px">3,493</div></div><div class="b dc" style="left:917px;top:350px;width:191px;height:32px;background:#a7bbd3"><div class="num" style="top:9px">0</div></div><div class="b dc" style="left:1110px;top:350px;width:190px;height:32px;background:#a7bbd3"><div class="num" style="top:9px">327</div></div><div class="b dc" style="left:1302px;top:350px;width:191px;height:32px;background:#a7bbd3"><div class="two" style="top:2px">0.00%<br>68.12%</div></div><div class="b dc" style="left:1495px;top:350px;width:190px;height:32px;background:#a7bbd3"><div class="two" style="top:2px">0<br>0</div></div><div class="b dc" style="left:1687px;top:350px;width:191px;height:32px;background:#cccccc"><div class="num" style="top:9px">3,896,434</div></div><div class="b dc" style="left:2px;top:384px;width:336px;height:31px;background:#ffffff"><div class="lk" style="top:8px">9B) Other Practitioners Services - Sup. Payments</div></div><div class="b dc" style="left:340px;top:384px;width:190px;height:31px;background:#cccccc"><div class="num" style="top:8px">0</div></div><div class="b dc" style="left:532px;top:384px;width:191px;height:31px;background:#cccccc"><div class="num" style="top:8px">0</div></div><div class="b dc" style="left:725px;top:384px;width:190px;height:31px;background:#cccccc"><div class="num" style="top:8px">0</div></div><div class="b dc" style="left:917px;top:384px;width:191px;height:31px;background:#cccccc"><div class="num" style="top:8px">0</div></div><div class="b dc" style="left:1110px;top:384px;width:190px;height:31px;background:#cccccc"><div class="num" style="top:8px">0</div></div><div class="b dc" style="left:1302px;top:384px;width:191px;height:31px;background:#cccccc"><div class="two" style="top:1px">N/A<br>68.12%</div></div><div class="b dc" style="left:1495px;top:384px;width:190px;height:31px;background:#cccccc"><div class="two" style="top:1px">0<br>0</div></div><div class="b dc" style="left:1687px;top:384px;width:191px;height:31px;background:#cccccc"><div class="num" style="top:8px">0</div></div><div class="b dc" style="left:2px;top:417px;width:336px;height:32px;background:#a7bbd3"><div class="lk" style="top:9px">10) Clinic Services</div></div><div class="b dc" style="left:340px;top:417px;width:190px;height:32px;background:#a7bbd3"><div class="num" style="top:9px">8,548,859</div></div><div class="b dc" style="left:532px;top:417px;width:191px;height:32px;background:#a7bbd3"><div class="num" style="top:9px">4,791,622</div></div><div class="b dc" style="left:725px;top:417px;width:190px;height:32px;background:#a7bbd3"><div class="num" style="top:9px">2,192</div></div><div class="b dc" style="left:917px;top:417px;width:191px;height:32px;background:#a7bbd3"><div class="num" style="top:9px">1,361,319</div></div><div class="b dc" style="left:1110px;top:417px;width:190px;height:32px;background:#a7bbd3"><div class="num" style="top:9px">0</div></div><div class="b dc" style="left:1302px;top:417px;width:191px;height:32px;background:#a7bbd3"><div class="two" style="top:2px">0.00%<br>68.12%</div></div><div class="b dc" style="left:1495px;top:417px;width:190px;height:32px;background:#a7bbd3"><div class="two" style="top:2px">0<br>0</div></div><div class="b dc" style="left:1687px;top:417px;width:191px;height:32px;background:#cccccc"><div class="num" style="top:9px">6,155,133</div></div><div class="b dc" style="left:2px;top:451px;width:336px;height:31px;background:#ffffff"><div class="lk" style="top:9px">11) Laboratory/Radiological</div></div><div class="b dc" style="left:340px;top:451px;width:190px;height:31px;background:#ffffff"><div class="num" style="top:9px">22,636,572</div></div><div class="b dc" style="left:532px;top:451px;width:191px;height:31px;background:#ffffff"><div class="num" style="top:9px">15,366,620</div></div><div class="b dc" style="left:725px;top:451px;width:190px;height:31px;background:#ffffff"><div class="num" style="top:9px">26,759</div></div><div class="b dc" style="left:917px;top:451px;width:191px;height:31px;background:#ffffff"><div class="num" style="top:9px">15,110</div></div><div class="b dc" style="left:1110px;top:451px;width:190px;height:31px;background:#ffffff"><div class="num" style="top:9px">27,081</div></div><div class="b dc" style="left:1302px;top:451px;width:191px;height:31px;background:#ffffff"><div class="two" style="top:1px">0.00%<br>68.12%</div></div><div class="b dc" style="left:1495px;top:451px;width:190px;height:31px;background:#ffffff"><div class="two" style="top:1px">0<br>0</div></div><div class="b dc" style="left:1687px;top:451px;width:191px;height:31px;background:#cccccc"><div class="num" style="top:9px">15,435,570</div></div><div class="b dc" style="left:2px;top:484px;width:336px;height:32px;background:#a7bbd3"><div class="lk" style="top:9px">12) Home Health Services</div></div><div class="b dc" style="left:340px;top:484px;width:190px;height:32px;background:#a7bbd3"><div class="num" style="top:9px">16,910,899</div></div><div class="b dc" style="left:532px;top:484px;width:191px;height:32px;background:#a7bbd3"><div class="num" style="top:9px">11,513,896</div></div><div class="b dc" style="left:725px;top:484px;width:190px;height:32px;background:#a7bbd3"><div class="num" style="top:9px">6,773</div></div><div class="b dc" style="left:917px;top:484px;width:191px;height:32px;background:#a7bbd3"><div class="num" style="top:9px">0</div></div><div class="b dc" style="left:1110px;top:484px;width:190px;height:32px;background:#a7bbd3"><div class="num" style="top:9px">1,362</div></div><div class="b dc" style="left:1302px;top:484px;width:191px;height:32px;background:#a7bbd3"><div class="two" style="top:2px">0.00%<br>68.12%</div></div><div class="b dc" style="left:1495px;top:484px;width:190px;height:32px;background:#a7bbd3"><div class="two" style="top:2px">0<br>0</div></div><div class="b dc" style="left:1687px;top:484px;width:191px;height:32px;background:#cccccc"><div class="num" style="top:9px">11,522,031</div></div><div class="b dc" style="left:2px;top:518px;width:336px;height:31px;background:#ffffff"><div class="lk" style="top:9px">13) Sterilizations</div></div><div class="b dc" style="left:340px;top:518px;width:190px;height:31px;background:#ffffff"><div class="num" style="top:9px">2,076,563</div></div><div class="b dc" style="left:532px;top:518px;width:191px;height:31px;background:#ffffff"><div class="num" style="top:9px">0</div></div><div class="b dc" style="left:725px;top:518px;width:190px;height:31px;background:#ffffff"><div class="num" style="top:9px">396</div></div><div class="b dc" style="left:917px;top:518px;width:191px;height:31px;background:#ffffff"><div class="num" style="top:9px">1,868,550</div></div><div class="b dc" style="left:1110px;top:518px;width:190px;height:31px;background:#ffffff"><div class="num" style="top:9px">0</div></div><div class="b dc" style="left:1302px;top:518px;width:191px;height:31px;background:#ffffff"><div class="two" style="top:1px">0.00%<br>68.12%</div></div><div class="b dc" style="left:1495px;top:518px;width:190px;height:31px;background:#ffffff"><div class="two" style="top:1px">0<br>0</div></div><div class="b dc" style="left:1687px;top:518px;width:191px;height:31px;background:#cccccc"><div class="num" style="top:9px">1,868,946</div></div></div><div class="b" style="left:1884px;top:368px;width:16px;height:551px;background:linear-gradient(90deg,#e8e8e8,#f0f0f0 20%,#f0f0f0 80%,#e6e6e6)"></div><div class="b" style="left:1885px;top:473px;width:14px;height:93px;border:1px solid #a0a0a0;border-radius:2px;background:linear-gradient(90deg,#f4f4f4,#e4e4e4 45%,#d4d4d4)"></div><div class="b grip" style="left:1888px;top:515px"></div><div class="b" style="left:1888px;top:375px;width:0;height:0;border-left:4px solid transparent;border-right:4px solid transparent;border-bottom:4px solid #444"></div><div class="b" style="left:1888px;top:909px;width:0;height:0;border-left:4px solid transparent;border-right:4px solid transparent;border-top:4px solid #444"></div><div class="b foot">* Optional Breast &amp; Cervical Cancer Services calculated at an Enhanced FMAP rate of 77.68% and/or the IHS Services rate of 100%</div><div class="b btn" style="left:850px;top:956px;width:56px">Return</div><div class="b btn" style="left:915px;top:956px;width:45px">Print</div><div class="b btn" style="left:968px;top:956px;width:50px">Excel</div><div class="b" style="left:0;top:1056px;width:1920px;height:1px;background:#a0a0a0"></div><div class="b" style="left:0;top:1057px;width:1920px;height:21px;background:#f0eeed"></div><div class="b zoomtxt">100%</div><svg class="b" style="left:1828px;top:1059px" width="92" height="20" viewBox="0 0 92 20">
 <path d="M10.5 10 L14.5 14.5" stroke="#a0622a" stroke-width="2.4" stroke-linecap="round"/>
 <circle cx="8" cy="6.8" r="4.6" fill="#fff" stroke="#8a9aaa" stroke-width="1.2"/>
 <path d="M8 3.8 V9.8 M5 6.8 H11" stroke="#1c6ee0" stroke-width="2"/>
 <path d="M62 7 H69.5 L65.75 11 Z" fill="#222"/>
 <g fill="#9a9a9a"><rect x="87" y="11" width="1" height="1"/><rect x="84" y="14" width="1" height="1"/><rect x="87" y="14" width="1" height="1"/><rect x="81" y="17" width="1" height="1"/><rect x="84" y="17" width="1" height="1"/><rect x="87" y="17" width="1" height="1"/></g>
</svg>
</body></html>
